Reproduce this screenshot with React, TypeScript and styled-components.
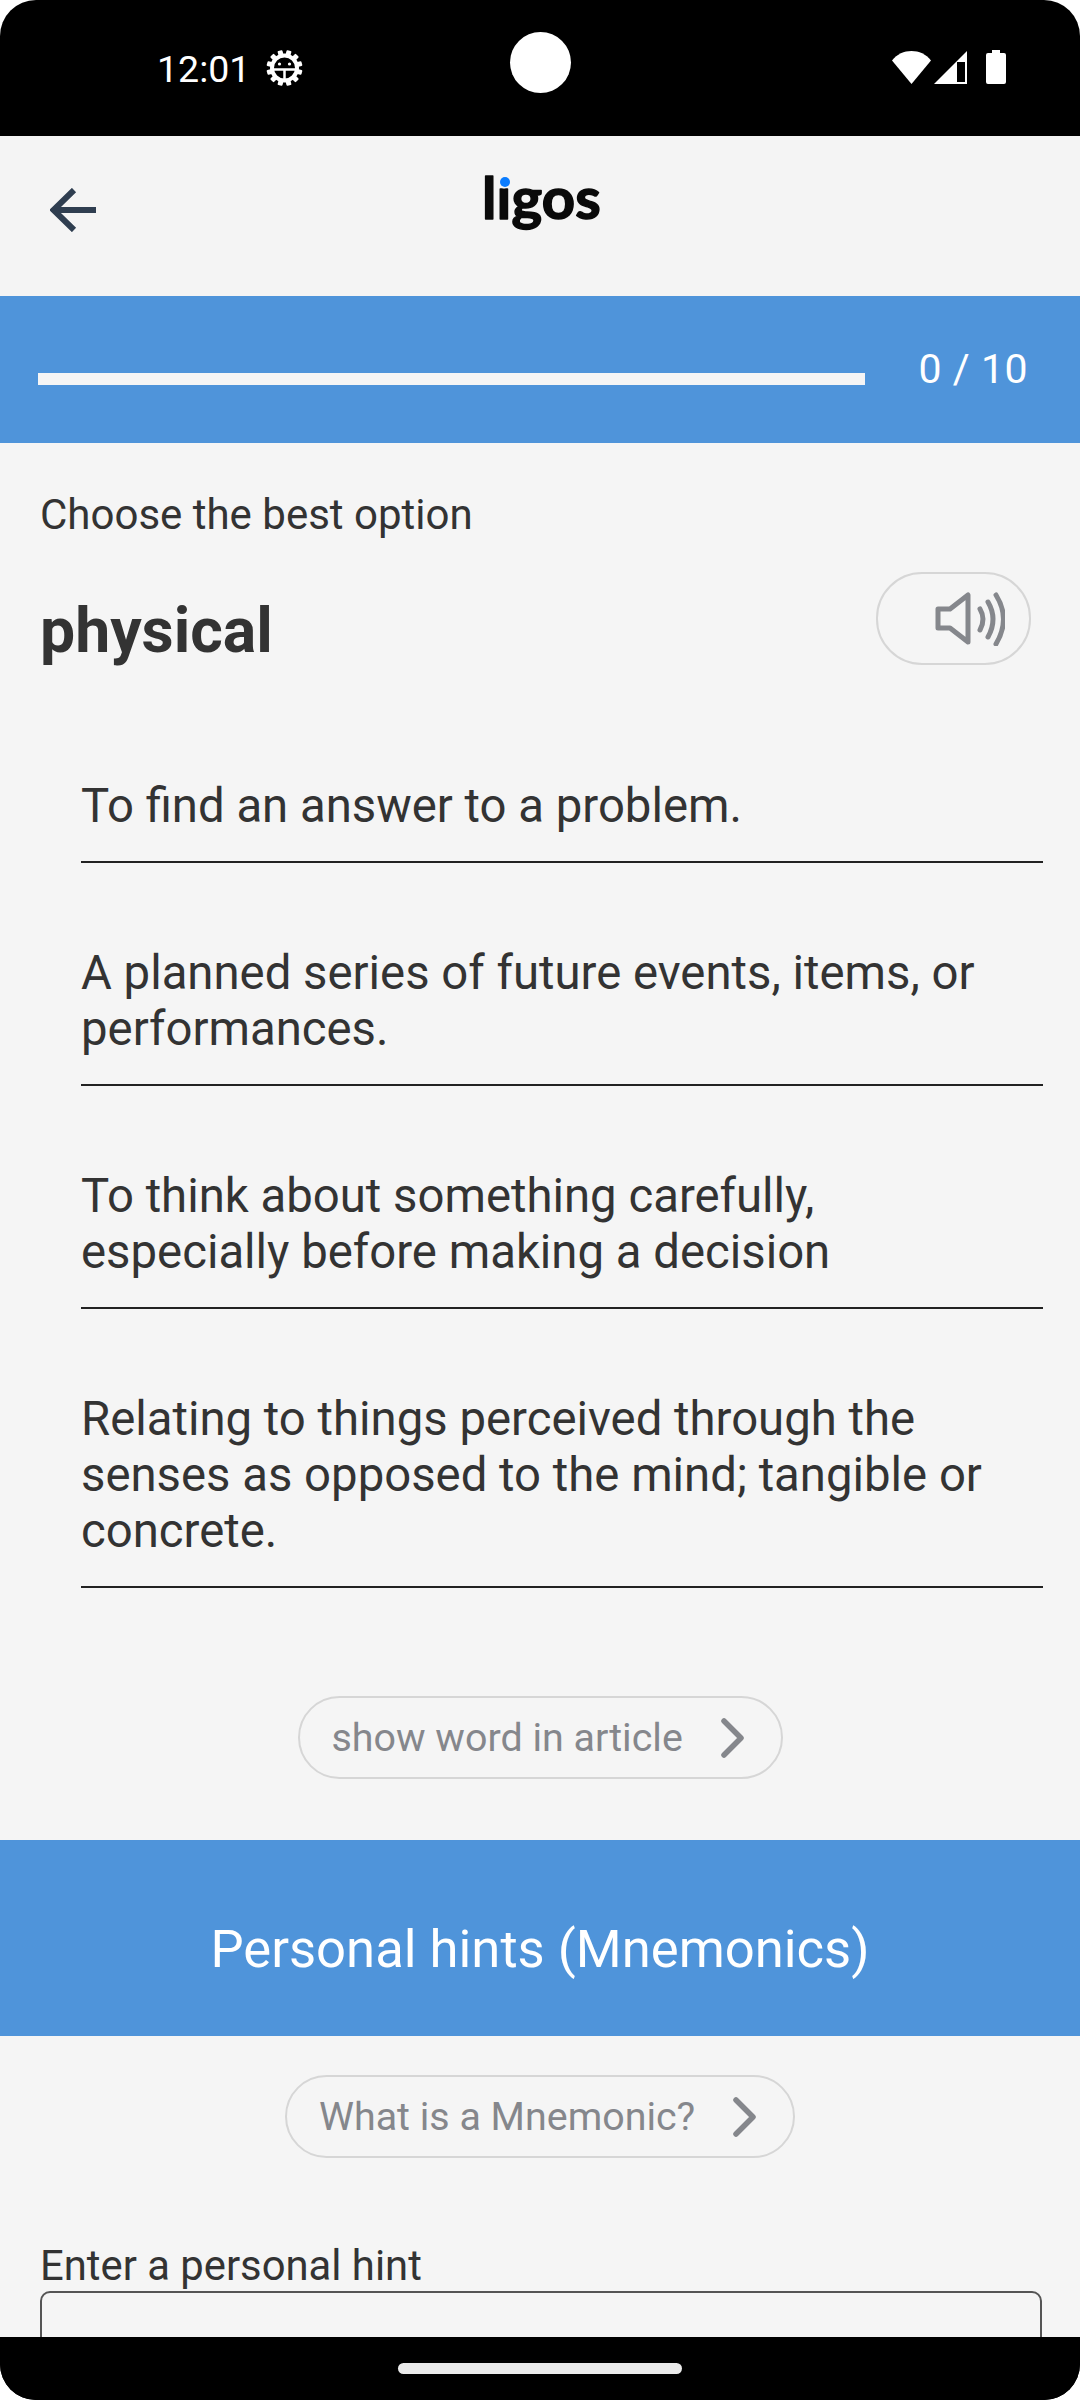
import React from 'react';
import styled, { createGlobalStyle } from 'styled-components';

const GlobalStyle = createGlobalStyle`
  html, body {
    margin: 0;
    padding: 0;
    background: #fff;
    font-family: Roboto, "Liberation Sans", sans-serif;
  }
`;

const Screen = styled.div`
  width: 1080px;
  height: 2400px;
  display: flex;
  flex-direction: column;
  overflow: hidden;
  border-radius: 36px;
  background: #000;
`;

const StatusBar = styled.div`
  position: relative;
  flex: none;
  height: 136px;
  padding: 0 74px 0 157px;
  box-sizing: border-box;
  display: flex;
  align-items: flex-start;
  justify-content: space-between;
  color: #fff;
`;

const StatusLeft = styled.div`
  display: flex;
  align-items: center;
  gap: 16px;
  height: 36px;
  margin-top: 50px;
`;

const Time = styled.span`
  font-size: 37.5px;
  line-height: 36px;
  margin-top: 1px;
`;

const StatusRight = styled.div`
  display: flex;
  align-items: center;
  margin-top: 49px;
  height: 36px;
`;

const Camera = styled.div`
  position: absolute;
  left: 510px;
  top: 32px;
  width: 61px;
  height: 61px;
  border-radius: 50%;
  background: #fff;
`;

const Page = styled.div`
  flex: 1;
  min-height: 0;
  overflow: hidden;
  background: #f5f5f5;
`;

const Header = styled.header`
  position: relative;
  height: 160px;
  background: #f4f4f4;
  display: flex;
  align-items: center;
  padding: 0 0 13px 50px;
  box-sizing: border-box;
`;

const LogoMark = styled.svg`
  position: absolute;
  left: 480px;
  top: 8px;
`;

const ProgressBand = styled.div`
  height: 147px;
  background: #4f94da;
  display: flex;
  align-items: center;
  padding: 0 52px 0 38px;
  box-sizing: border-box;
`;

const ProgressTrack = styled.div`
  width: 827px;
  height: 12px;
  margin-top: 19px;
  background: #f5f5f5;
`;

const ProgressLabel = styled.span`
  margin-left: auto;
  margin-bottom: 2px;
  color: #fff;
  font-size: 41px;
  letter-spacing: 0.5px;
`;

const Question = styled.section`
  padding: 47px 49px 0 40px;
`;

const Prompt = styled.div`
  font-size: 42px;
  line-height: 50px;
  color: #333;
`;

const WordRow = styled.div`
  display: flex;
  align-items: center;
  justify-content: space-between;
  margin-top: 32px;
`;

const Word = styled.h1`
  margin: 0;
  padding-top: 24px;
  font-size: 62.5px;
  line-height: 60px;
  font-weight: 700;
  color: #333;
`;

const SoundButton = styled.button`
  width: 155px;
  height: 93px;
  padding: 0 24px 0 0;
  box-sizing: border-box;
  display: flex;
  align-items: center;
  justify-content: flex-end;
  background: transparent;
  border: 2px solid #d6d6d6;
  border-radius: 46px;
`;

const Options = styled.div`
  margin: 31px 37px 0 81px;
`;

const Option = styled.div`
  padding: 82px 0 27px;
  border-bottom: 2px solid #222;
  font-size: 47.3px;
  line-height: 56px;
  color: #333;
`;

const Centered = styled.div<{ $top: number }>`
  display: flex;
  justify-content: center;
  margin-top: ${(p) => p.$top}px;
`;

const PillLink = styled.a<{ $width: number }>`
  width: ${(p) => p.$width}px;
  height: 83px;
  box-sizing: border-box;
  padding: 0 35px 0 32px;
  display: flex;
  align-items: center;
  justify-content: space-between;
  border: 2px solid #d6d6d6;
  border-radius: 42px;
  color: #85878c;
  font-size: 39.4px;
`;

const HintsBand = styled.div`
  margin-top: 61px;
  height: 196px;
  padding-top: 22px;
  box-sizing: border-box;
  background: #4f94da;
  display: flex;
  align-items: center;
  justify-content: center;
  color: #fff;
  font-size: 52.6px;
`;

const HintForm = styled.div`
  padding: 83px 38px 0 40px;
`;

const HintLabel = styled.label`
  display: block;
  font-size: 41.8px;
  line-height: 50px;
  color: #333;
`;

const HintInput = styled.div`
  height: 120px;
  box-sizing: border-box;
  border: 2px solid #555;
  border-radius: 10px;
`;

const NavBar = styled.div`
  flex: none;
  height: 63px;
  display: flex;
  justify-content: center;
  padding-top: 26px;
  box-sizing: border-box;
  background: #000;
`;

const HomePill = styled.div`
  width: 284px;
  height: 11px;
  border-radius: 6px;
  background: #ebebeb;
`;

const BugGear = () => (
  <svg width="37" height="36" viewBox="0 0 37 36">
    <g fill="#fff">
      {Array.from({ length: 12 }).map((_, i) => (
        <rect key={i} x="16" y="0" width="5" height="7" rx="1" transform={`rotate(${i * 30 + 15} 18.5 18)`} />
      ))}
    </g>
    <circle cx="18.5" cy="18" r="12.5" fill="#000" stroke="#fff" strokeWidth="4" />
    <path d="M7 19.5H30M18.5 19.5V30" stroke="#fff" strokeWidth="2.5" fill="none" />
    <circle cx="13.5" cy="14" r="1.6" fill="#fff" />
    <circle cx="23.5" cy="14" r="1.6" fill="#fff" />
  </svg>
);

const WifiIcon = () => (
  <svg width="39" height="34" viewBox="0 0 39 34">
    <path d="M0 10.5C5 4 12 1 19.5 1S34 4 39 10.5L19.5 34Z" fill="#fff" />
  </svg>
);

const SignalIcon = () => (
  <svg width="33" height="33" viewBox="0 0 33 33" style={{ marginLeft: 3 }}>
    <path d="M33 0V33H0Z" fill="#fff" />
    <rect x="23" y="11" width="8" height="20" fill="#000" />
  </svg>
);

const BatteryIcon = () => (
  <svg width="20" height="34" viewBox="0 0 20 34" style={{ marginLeft: 19 }}>
    <path d="M6 0H14V3H18Q20 3 20 5V32Q20 34 18 34H2Q0 34 0 32V5Q0 3 2 3H6Z" fill="#fff" />
  </svg>
);

const BackArrow = () => (
  <svg width="46" height="44" viewBox="0 0 46 44">
    <path d="M46 22H4M24 2L3.5 22L24 42" fill="none" stroke="#2f3e50" strokeWidth="6" />
  </svg>
);

const Logo = () => (
  <LogoMark width="124" height="110" viewBox="0 0 124 110">
    <text
      x="2"
      y="75"
      fontFamily="Lato, sans-serif"
      fontWeight="700"
      fontSize="58"
      letterSpacing="0.2"
      fill="#0a0a0a"
      stroke="#0a0a0a"
      strokeWidth="1.5"
      strokeLinejoin="round"
    >
      ligos
    </text>
    <circle cx="24" cy="36" r="8.5" fill="#f4f4f4" />
    <circle cx="25" cy="38" r="5" fill="#0a7cff" />
  </LogoMark>
);

const SpeakerIcon = () => (
  <svg width="70" height="54" viewBox="0 0 70 54" fill="none" stroke="#85878c" strokeWidth="5" strokeLinecap="round" strokeLinejoin="round">
    <path d="M3 17H15L33 3V50L15 36H3Z" />
    <path d="M45 17Q51 27 45 38" />
    <path d="M53 10Q63 27 53 45" />
    <path d="M61 3Q76 27 61 52" />
  </svg>
);

const Chevron = () => (
  <svg width="26" height="42" viewBox="0 0 26 42" fill="none" stroke="#85878c" strokeWidth="5.5" strokeLinecap="round" strokeLinejoin="round">
    <path d="M4 4L21 21L4 38" />
  </svg>
);

const options = [
  ['To find an answer to a problem.'],
  ['A planned series of future events, items, or', 'performances.'],
  ['To think about something carefully,', 'especially before making a decision'],
  ['Relating to things perceived through the', 'senses as opposed to the mind; tangible or', 'concrete.'],
];

export default function App() {
  return (
    <>
      <GlobalStyle />
      <Screen>
        <StatusBar>
          <StatusLeft>
            <Time>12:01</Time>
            <BugGear />
          </StatusLeft>
          <Camera />
          <StatusRight>
            <WifiIcon />
            <SignalIcon />
            <BatteryIcon />
          </StatusRight>
        </StatusBar>
        <Page>
          <Header>
            <BackArrow />
            <Logo />
          </Header>
          <ProgressBand>
            <ProgressTrack />
            <ProgressLabel>0 / 10</ProgressLabel>
          </ProgressBand>
          <Question>
            <Prompt>Choose the best option</Prompt>
            <WordRow>
              <Word>physical</Word>
              <SoundButton>
                <SpeakerIcon />
              </SoundButton>
            </WordRow>
          </Question>
          <Options>
            {options.map((lines, i) => (
              <Option key={i}>
                {lines.map((line, j) => (
                  <div key={j}>{line}</div>
                ))}
              </Option>
            ))}
          </Options>
          <Centered $top={108}>
            <PillLink $width={485}>
              show word in article
              <Chevron />
            </PillLink>
          </Centered>
          <HintsBand>Personal hints (Mnemonics)</HintsBand>
          <Centered $top={39}>
            <PillLink $width={510}>
              What is a Mnemonic?
              <Chevron />
            </PillLink>
          </Centered>
          <HintForm>
            <HintLabel>Enter a personal hint</HintLabel>
            <HintInput />
          </HintForm>
        </Page>
        <NavBar>
          <HomePill />
        </NavBar>
      </Screen>
    </>
  );
}
